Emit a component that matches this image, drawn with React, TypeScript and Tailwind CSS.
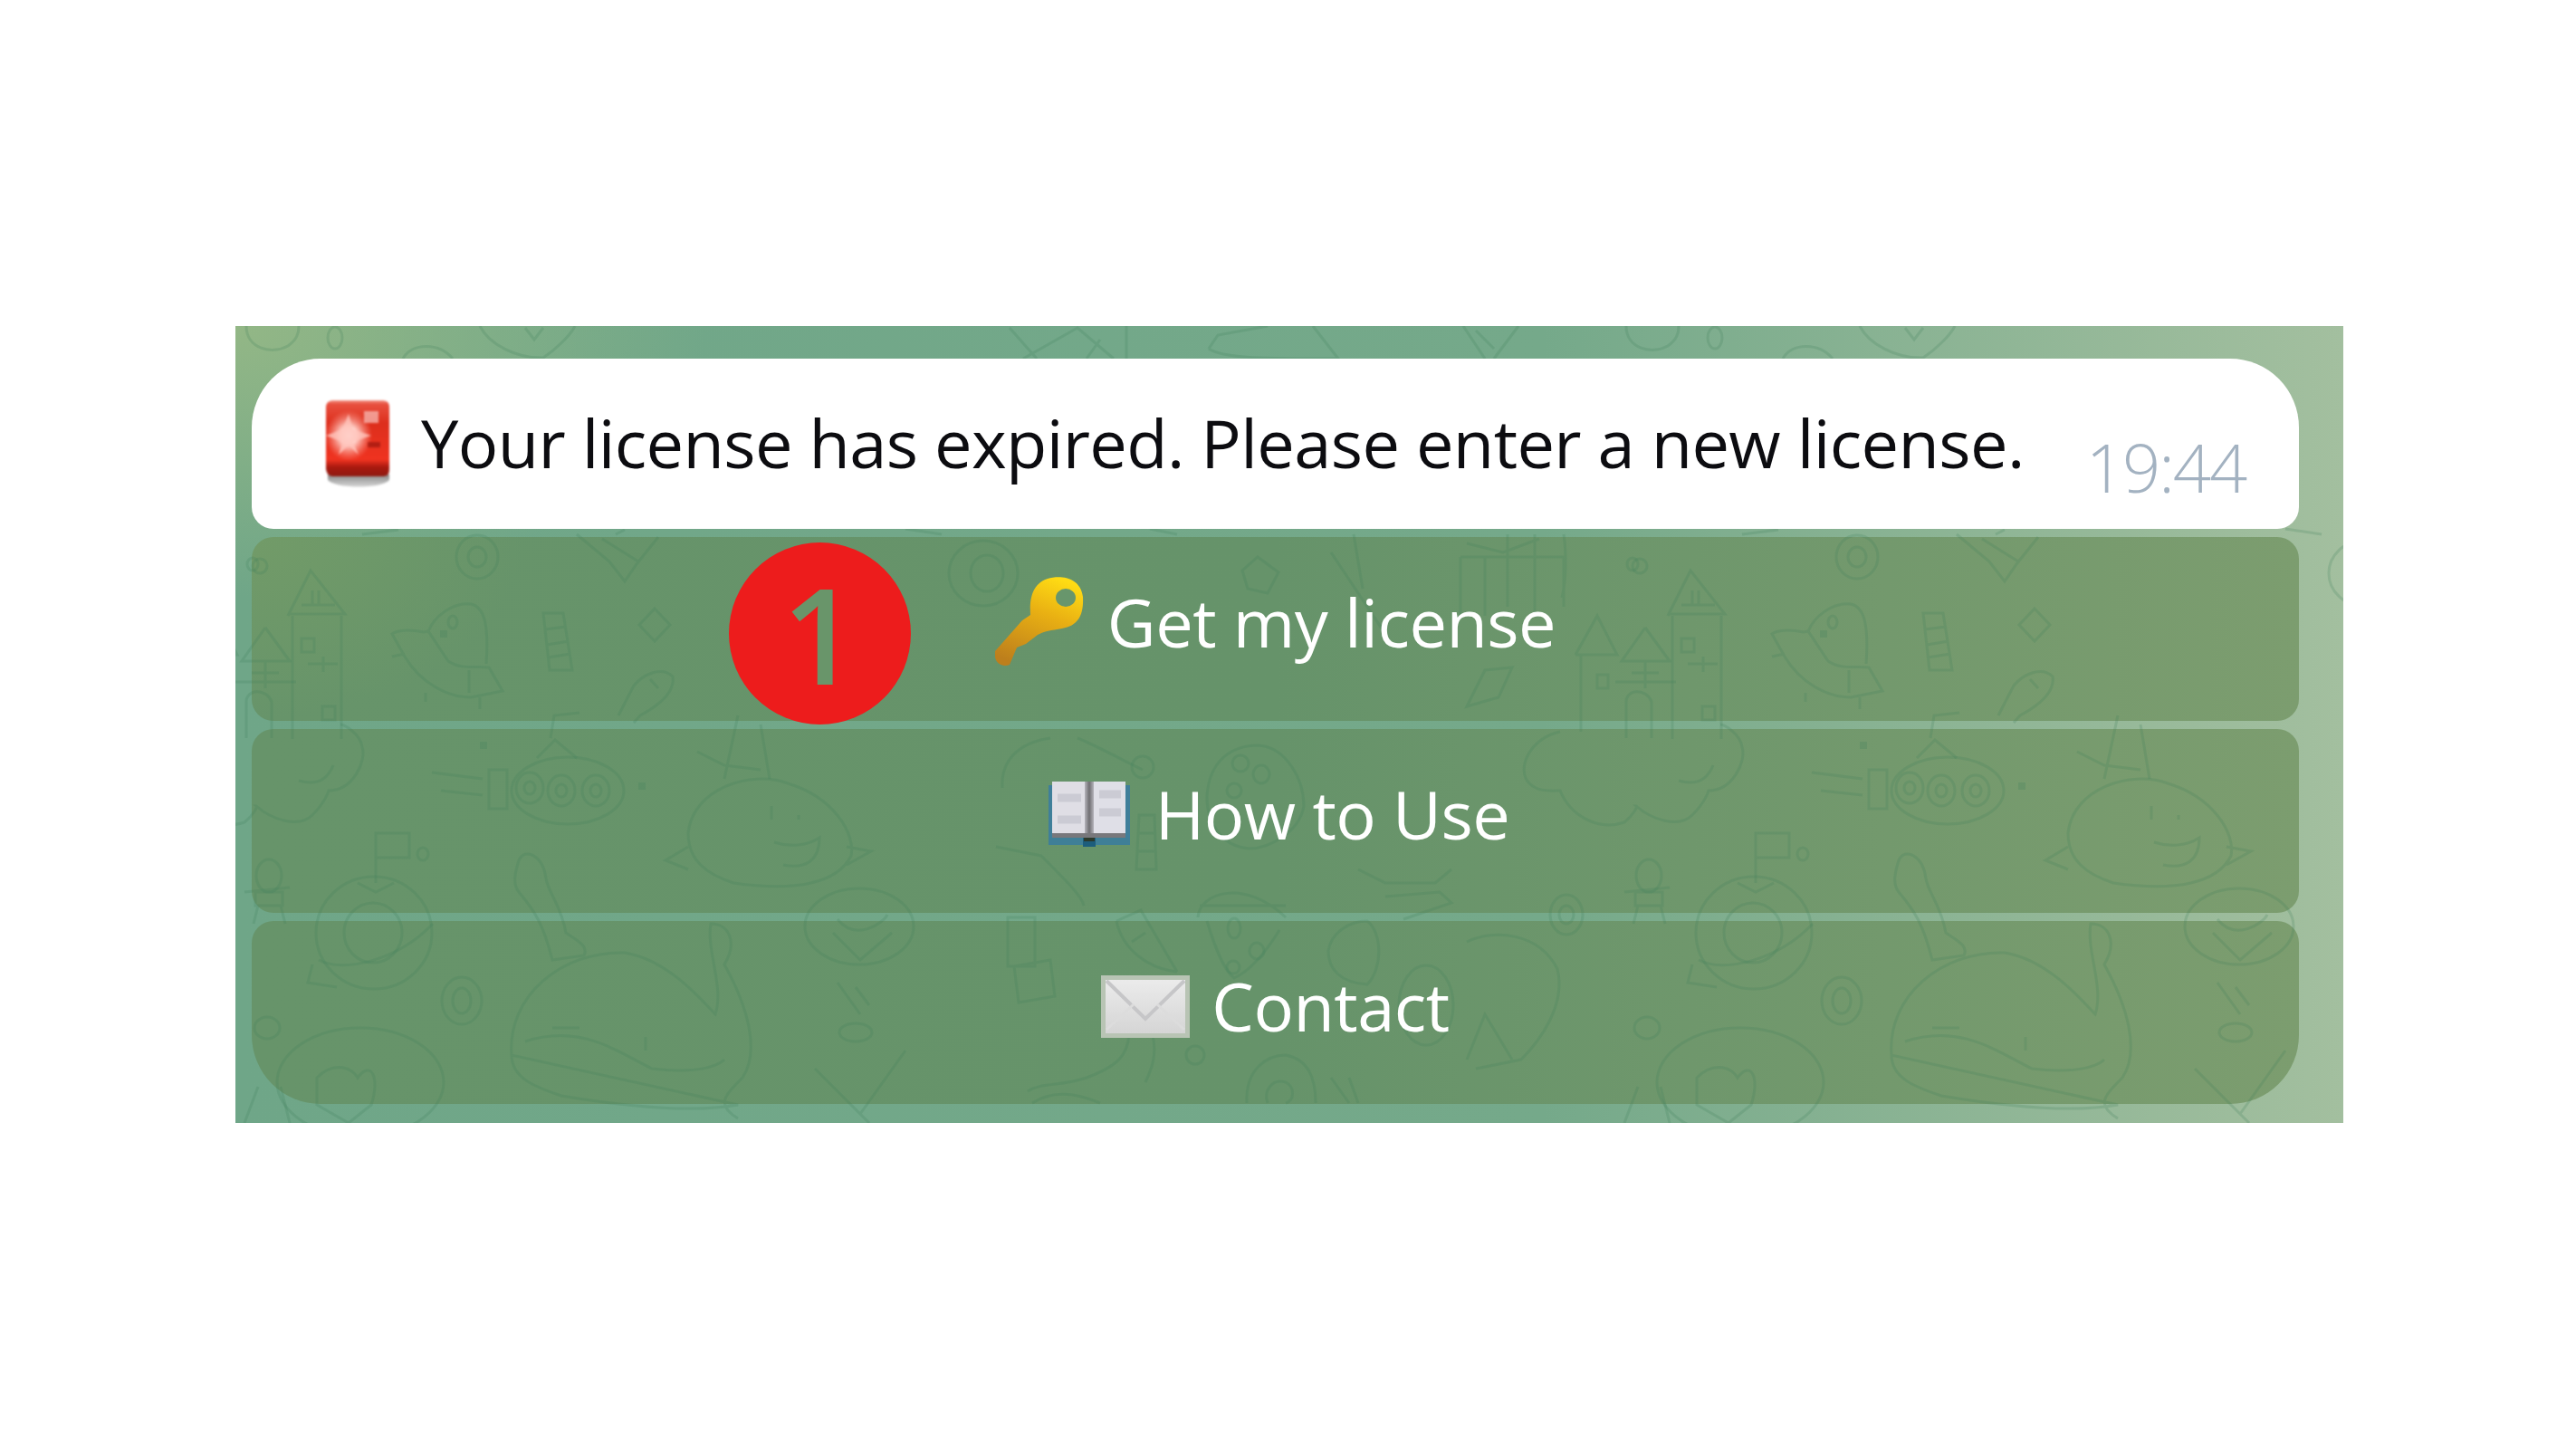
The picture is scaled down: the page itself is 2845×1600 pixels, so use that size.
// Expired-license bot message with inline keyboard
function Siren() {
  return (
    <svg width="72" height="100" viewBox="0 0 72 100" className="shrink-0 blur-[0.8px]">
      <defs>
        <linearGradient id="sirenBody" x1="0" y1="0" x2="0" y2="1">
          <stop offset="0" stopColor="#f2998c" />
          <stop offset="0.05" stopColor="#e8503f" />
          <stop offset="0.3" stopColor="#dd2f1d" />
          <stop offset="0.78" stopColor="#ef3320" />
          <stop offset="0.88" stopColor="#a8190f" />
          <stop offset="1" stopColor="#8f1a12" />
        </linearGradient>
        <linearGradient id="sirenBase" x1="0" y1="0" x2="0" y2="1">
          <stop offset="0" stopColor="#8a8a8a" />
          <stop offset="1" stopColor="#d5d5d5" />
        </linearGradient>
        <radialGradient id="sirenGlow" cx="0.5" cy="0.5" r="0.5">
          <stop offset="0" stopColor="#ffffff" />
          <stop offset="0.35" stopColor="#ffd7d0" />
          <stop offset="1" stopColor="#ff9a8c" stopOpacity="0" />
        </radialGradient>
      </defs>
      <path d="M2 84H70V90C62 100 10 100 2 90Z" fill="url(#sirenBase)" />
      <path d="M0 10C0 4 4 2 8 2H62C67 2 70 4 70 10V78C70 84 68 86 62 86H8C4 86 1 84 0 78Z" fill="url(#sirenBody)" />
      <ellipse cx="25" cy="41" rx="26" ry="28" fill="url(#sirenGlow)" />
      <path d="M25 17L30 34L50 41L30 48L36 62L25 52L14 62L18 48L0 41L18 34Z" fill="#ffc3ba" opacity="0.8" />
      <rect x="42" y="14" width="16" height="13" fill="#f7b8b2" opacity="0.75" />
      <rect x="46" y="48" width="14" height="6" fill="#a61a10" opacity="0.8" />
    </svg>
  );
}

function KeyIcon() {
  return (
    <svg width="98" height="100" viewBox="0 0 98 100" className="shrink-0 blur-[0.5px]">
      <defs>
        <linearGradient id="keyGold" x1="0.7" y1="0" x2="0.3" y2="1">
          <stop offset="0" stopColor="#ffdc14" />
          <stop offset="0.4" stopColor="#e9b013" />
          <stop offset="1" stopColor="#bd7f1c" />
        </linearGradient>
      </defs>
      <path
        d="M0 82L30 48L39 42C38 26 40 8 58 2C72-2 94 0 97 22C98 42 92 54 74 57C62 59 54 60 47 64L34 74L24 78L16 97C8 100-2 96 0 82Z"
        fill="url(#keyGold)"
      />
      <ellipse cx="78" cy="23" rx="11" ry="10" fill="#68966c" />
    </svg>
  );
}

function BookIcon() {
  return (
    <svg width="90" height="72" viewBox="0 0 90 72" className="shrink-0 blur-[0.5px]">
      <defs>
        <linearGradient id="bookSpine" x1="0" y1="0" x2="1" y2="0">
          <stop offset="0" stopColor="#b5b4bb" />
          <stop offset="0.5" stopColor="#6f6e72" />
          <stop offset="1" stopColor="#b5b4bb" />
        </linearGradient>
      </defs>
      <rect x="0" y="4" width="90" height="64" fill="#3f7f9a" />
      <rect x="0" y="62" width="90" height="8" fill="#3f7f97" />
      <rect x="38" y="62" width="14" height="10" fill="#1d5d7c" />
      <path d="M4 0H42V57H4Z" fill="#dfdee5" />
      <path d="M48 0H85V57H48Z" fill="#dfdfe7" />
      <path d="M10 18H36M10 42H36M56 14H80M56 34H80" stroke="#cbcbd4" strokeWidth="9" />
      <rect x="40" y="0" width="10" height="58" fill="url(#bookSpine)" />
      <rect x="4" y="57" width="81" height="5" fill="#78787c" />
      <rect x="39" y="62" width="12" height="4" fill="#2c3a2c" />
    </svg>
  );
}

function EnvelopeIcon() {
  return (
    <svg width="98" height="69" viewBox="0 0 98 69" className="shrink-0 blur-[0.4px]">
      <defs>
        <linearGradient id="envelope" x1="0" y1="0" x2="0" y2="1">
          <stop offset="0" stopColor="#ebebeb" />
          <stop offset="1" stopColor="#d5d5d5" />
        </linearGradient>
      </defs>
      <rect x="0" y="0" width="98" height="69" fill="#b8c4b4" />
      <rect x="5" y="5" width="88" height="59" fill="url(#envelope)" />
      <path d="M6 6L49 48L92 6" fill="none" stroke="#c6c6c8" strokeWidth="4" />
      <path d="M6 60L36 32M92 60L62 32" fill="none" stroke="#dcdcdc" strokeWidth="3" />
    </svg>
  );
}

// one repeat of the wallpaper; coordinates are page pixels
function DoodleTile() {
  return (
    <>
      {/* castle with cloud */}
      <path d="M318 680L343 630L381 678H318M323 680V816M377 680V816M333 668H370M345 652V668M352 652V668M333 705H347V720H333ZM340 733H373M357 725V742M356 780H370V795H356Z" />
      <path d="M293 693L267 730L322 730M293 693L320 730M260 753H327M293 730V760M278 743H308M300 815V775C295 760 272 760 272 775V815" />
      <path d="M216 723L240 680L262 723H216M222 723V808M240 745H252V760H240Z" />
      <path d="M199 808C165 815 150 850 165 865C175 875 190 873 199 873C210 900 240 918 270 908C280 900 285 890 283 890C300 905 330 915 345 900C360 885 363 873 363 873C390 873 405 840 400 825C398 810 380 800 376 800M330 862C350 868 362 860 368 845" />
      {/* flying saucer */}
      <path d="M473 697C480 680 500 665 520 667C535 670 540 690 537 733M433 700C440 695 455 695 468 698L473 697L495 730C510 740 525 735 540 737L555 763L520 770C495 770 465 755 447 725ZM433 725L447 722M470 765V775M530 770V783M518 740V765" />
      <ellipse cx="500" cy="687" rx="5" ry="7" />
      <rect x="486" y="696" width="8" height="8" fill="#3f7f5a" fillOpacity="0.25" stroke="none" />
      {/* candy */}
      <path d="M600 677L622 677L632 740L607 740ZM602 695L625 692M604 712L628 708M605 726L630 722" />
      <path d="M723 672L740 690L723 708L706 690Z" />
      {/* small rocket */}
      <path d="M683 790L700 757C710 745 730 735 743 747C745 760 735 775 707 790L700 798M727 760L718 750" />
      <path d="M637 590L673 620L690 642L703 623L727 593M665 595L705 620" />
      <ellipse cx="527" cy="615" rx="23" ry="24" />
      <ellipse cx="527" cy="615" rx="10" ry="11" />
      <ellipse cx="287" cy="625" rx="8" ry="8" />
      {/* top strip */}
      <path d="M272 360C272 385 300 392 318 382C328 375 330 368 330 360" />
      <ellipse cx="370" cy="373" rx="8" ry="12" />
      <path d="M445 396C455 378 485 378 500 396M530 360C540 380 570 396 600 395C615 385 630 370 635 360M580 362L590 375L600 362" />
      <path d="M1115 362L1145 396M1130 396L1190 362L1230 396M1244 360V396M1200 396L1215 375M1335 385L1345 370L1400 360M1335 385C1350 396 1400 396 1478 396L1450 360M1616 360L1640 396M1677 360L1650 396M1630 365L1650 385" />
      <path d="M680 590L690 585M400 590L440 585M1000 584L1040 590M1270 584L1300 590" />
      {/* swirl and star */}
      <ellipse cx="1086" cy="633" rx="38" ry="36" />
      <ellipse cx="1090" cy="633" rx="18" ry="20" />
      <path d="M1389 615L1412 632L1400 655L1378 650L1372 630Z" />
      {/* gift */}
      <path d="M1613 615H1727V670M1613 615V680M1640 615V680M1665 590V670M1695 590V680M1727 590C1730 610 1730 640 1725 660M1620 600L1660 610L1700 595" />
      <path d="M1470 610L1530 700M1495 590L1505 650M1620 780L1640 740L1670 737L1655 770Z" />
      <ellipse cx="1803" cy="623" rx="6" ry="7" />
      {/* submarine */}
      <ellipse cx="627" cy="873" rx="62" ry="37" />
      <ellipse cx="585" cy="870" rx="15" ry="17" />
      <ellipse cx="585" cy="870" rx="6" ry="7" />
      <ellipse cx="620" cy="873" rx="15" ry="17" />
      <ellipse cx="620" cy="873" rx="6" ry="7" />
      <ellipse cx="658" cy="873" rx="15" ry="17" />
      <ellipse cx="658" cy="873" rx="6" ry="7" />
      <path d="M540 850H560V893H540ZM477 853L533 860M487 873L533 878M593 837L613 817L637 837M608 815L612 790L640 787" />
      <rect x="530" y="819" width="8" height="8" fill="#3f7f5a" fillOpacity="0.25" stroke="none" />
      <rect x="705" y="864" width="8" height="8" fill="#3f7f5a" fillOpacity="0.25" stroke="none" />
      {/* smiling apple */}
      <path d="M760 920C765 870 830 850 870 865C920 880 945 920 940 945C925 975 880 985 810 975C780 965 760 950 760 920ZM852 890V905M882 900V905M855 930C870 935 890 935 905 925C905 950 890 960 865 955M760 935L735 950L760 960M935 935L962 940L935 955" />
      <path d="M770 830L800 845L840 850M815 790L800 860M840 800L850 860" />
      {/* flag planet */}
      <ellipse cx="413" cy="1030" rx="64" ry="62" />
      <ellipse cx="412" cy="1030" rx="32" ry="33" />
      <path d="M415 920V975M415 920H452V947H415ZM352 1060C380 1075 440 1060 478 1020M345 1065L340 1085L372 1090M395 975L415 985L435 975" />
      <ellipse cx="467" cy="943" rx="6" ry="7" />
      {/* astronaut */}
      <ellipse cx="297" cy="967" rx="14" ry="18" />
      <path d="M282 985H312V1000H282ZM270 985L320 980M285 1000L280 1020M310 1000L315 1020" />
      {/* long sea creature */}
      <path d="M573 950C580 935 600 945 603 970C605 985 620 1000 625 1030C640 1040 650 1045 645 1055L610 1060C600 1020 590 1005 573 985C565 975 570 960 573 950Z" />
      {/* whale */}
      <path d="M565 1165C560 1100 620 1050 690 1052C740 1060 780 1110 790 1120C800 1090 780 1050 785 1020C805 1020 815 1040 800 1065C825 1110 840 1160 820 1190C800 1210 790 1220 815 1235M815 1220C760 1230 680 1220 620 1210C590 1200 565 1190 565 1165ZM580 1150C640 1130 680 1160 720 1180C760 1185 790 1180 800 1170M610 1135H640M713 1145V1160" />
      <ellipse cx="510" cy="1105" rx="22" ry="26" />
      <ellipse cx="510" cy="1105" rx="10" ry="14" />
      {/* heart in a circle */}
      <ellipse cx="398" cy="1195" rx="92" ry="60" />
      <path d="M350 1190C370 1170 390 1180 395 1190C410 1170 420 1190 410 1220L385 1240L350 1220Z" />
      <ellipse cx="295" cy="1135" rx="14" ry="12" />
      {/* cup */}
      <ellipse cx="949" cy="1023" rx="60" ry="42" />
      <path d="M925 1015C945 1040 975 1020 980 1010M920 1030L950 1060L985 1030" />
      {/* bottom pieces */}
      <path d="M285 1200L270 1240M310 1200L320 1240M900 1180L960 1240M1000 1160L950 1230M925 1085L950 1120M960 1110L945 1090" />
      <ellipse cx="945" cy="1140" rx="18" ry="10" />
      {/* egg with marks */}
      <path d="M1333 880C1335 840 1360 823 1390 823C1420 825 1440 860 1440 890C1435 920 1400 937 1380 937C1350 935 1333 910 1333 880Z" />
      <ellipse cx="1370" cy="843" rx="9" ry="9" />
      <ellipse cx="1393" cy="855" rx="9" ry="10" />
      <ellipse cx="1363" cy="873" rx="8" ry="8" />
      {/* blob and candy left of the book */}
      <path d="M1107 870C1105 840 1125 820 1160 815M1190 815C1215 825 1240 840 1262 850M1100 935L1150 945C1180 975 1195 990 1197 1000" />
      <ellipse cx="1262" cy="847" rx="12" ry="12" />
      <path d="M1258 900H1275L1277 960H1255ZM1258 920H1276M1257 940H1277" />
      {/* ice cream */}
      <path d="M1323 1013C1325 985 1375 970 1420 1013M1325 1000H1420M1333 1017C1340 1040 1350 1070 1363 1080C1385 1070 1405 1040 1413 1027" />
      <ellipse cx="1363" cy="1025" rx="7" ry="11" />
      <ellipse cx="1388" cy="1050" rx="8" ry="9" />
      <ellipse cx="1362" cy="1068" rx="7" ry="7" />
      {/* left tall pieces */}
      <path d="M1113 1013H1143V1067H1113ZM1120 1067L1160 1060L1165 1100L1125 1107Z" />
      <path d="M1233 1017C1240 1050 1270 1070 1300 1073M1233 1017L1260 1005L1300 1073M1250 1040L1265 1030" />
      {/* right pieces */}
      <path d="M1467 1050C1470 1030 1490 1017 1510 1017C1527 1030 1527 1070 1510 1087C1480 1085 1467 1070 1467 1050ZM1500 960L1530 975L1585 975L1603 960M1530 990L1590 985L1603 997L1550 1015" />
      {/* spiral */}
      <path d="M1377 1218C1375 1180 1400 1165 1420 1165C1445 1170 1453 1190 1453 1218M1400 1218C1395 1205 1405 1190 1420 1195C1430 1200 1430 1215 1420 1218M1470 1190L1490 1218M1490 1190L1500 1218" />
      {/* whale tail arc */}
      <path d="M1247 1143C1245 1165 1235 1177 1200 1190C1170 1200 1150 1195 1135 1205M1273 1143C1278 1165 1272 1180 1265 1195M1140 1218C1160 1205 1185 1205 1215 1218" />
      <ellipse cx="1320" cy="1165" rx="10" ry="10" />
      {/* planet and spare marks */}
      <path d="M1620 1040C1650 1025 1700 1030 1720 1070C1730 1110 1700 1150 1680 1170L1630 1180" />
      <ellipse cx="1575" cy="1110" rx="30" ry="44" />
      <path d="M1620 1170L1640 1120L1670 1170" />
      <ellipse cx="1730" cy="1010" rx="18" ry="22" />
      <ellipse cx="1730" cy="1010" rx="8" ry="10" />
    </>
  );
}

export default function App() {
  return (
    <div className="h-[1600px] w-[2845px] overflow-hidden bg-white pl-[260px] pt-[360px] font-['Open_Sans',sans-serif]">
      <div className="relative flex h-[880px] w-[2328px] flex-col gap-[9px] overflow-hidden bg-[radial-gradient(ellipse_520px_300px_at_0%_0%,#93b786,transparent),linear-gradient(90deg,#6fa688_0%,#75a98a_62%,#a3bf9f_100%)] pb-[22px] pl-[18px] pr-[49px] pt-[36px]">
        {/* wallpaper doodles */}
        <svg
          viewBox="260 360 2328 880"
          width="2328"
          height="880"
          fill="none"
          stroke="#3f7f5a"
          strokeWidth="3"
          strokeOpacity="0.22"
          className="pointer-events-none absolute inset-0 blur-[0.5px]"
        >
          <DoodleTile />
          <g transform="translate(1524 0)">
            <DoodleTile />
          </g>
          <g transform="translate(-1524 0)">
            <DoodleTile />
          </g>
        </svg>

        <div className="relative z-10 flex h-[188px] shrink-0 items-center rounded-b-[24px] rounded-t-[76px] bg-white pl-[82px]">
          <Siren />
          <span className="ml-[33px] mt-[-2px] whitespace-nowrap text-[74px] leading-[100px] tracking-[-0.62px] text-[#0c0c10]">
            Your license has expired. Please enter a new license.
          </span>
          <span className="ml-[68px] mt-[52px] text-[74px] font-light leading-[100px] tracking-[-2px] text-[#a3b2c1]">
            19:44
          </span>
        </div>

        <button className="flex h-[203px] shrink-0 items-center justify-center rounded-[24px] bg-[radial-gradient(ellipse_300px_200px_at_0%_0%,#729b68,transparent),linear-gradient(90deg,#67946a_0%,#66936a_50%,#7c9d6f_100%)] pb-[16px]">
          <span className="relative z-10 flex items-center gap-[26px] text-[74px] font-medium leading-[100px] tracking-[-0.5px] text-white">
            <KeyIcon />
            Get my license
          </span>
        </button>
        <button className="flex h-[203px] shrink-0 items-center justify-center rounded-[24px] bg-[linear-gradient(90deg,#67946a_0%,#66936a_50%,#7c9d6f_100%)] pb-[16px] pl-[8px]">
          <span className="relative z-10 flex items-center gap-[28px] text-[74px] font-medium leading-[100px] tracking-[-0.5px] text-white">
            <BookIcon />
            How to Use
          </span>
        </button>
        <button className="flex h-[202px] shrink-0 items-center justify-center rounded-b-[76px] rounded-t-[24px] bg-[linear-gradient(90deg,#67946a_0%,#66936a_50%,#7c9d6f_100%)] pb-[14px]">
          <span className="relative z-10 flex items-center gap-[24px] text-[74px] font-medium leading-[100px] tracking-[-0.5px] text-white">
            <EnvelopeIcon />
            Contact
          </span>
        </button>

        {/* step marker */}
        <div className="absolute left-[545px] top-[239px] z-20 flex h-[201px] w-[201px] items-center justify-center rounded-full bg-[#ed1c1c] text-[146px] font-semibold leading-none text-[#69956a]">
          1
        </div>
      </div>
    </div>
  );
}
